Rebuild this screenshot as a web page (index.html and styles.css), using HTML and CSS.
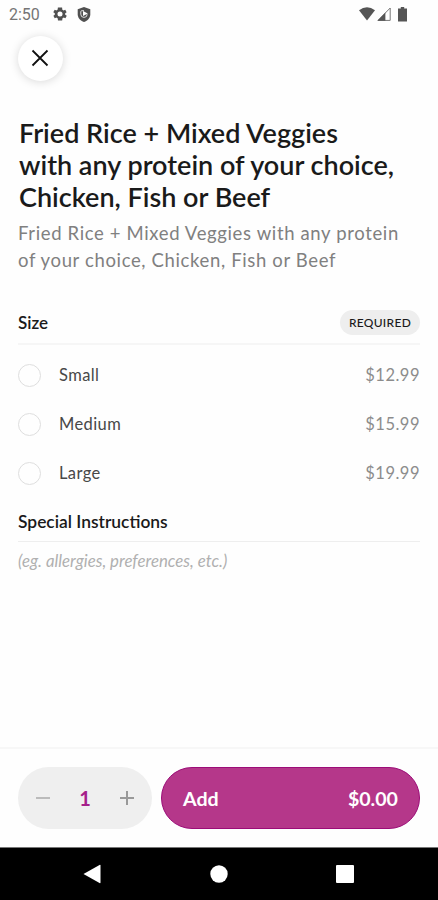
FILE: index.html
```html
<!DOCTYPE html>
<html lang="en">
<head>
    <meta charset="UTF-8">
    <meta name="viewport" content="width=device-width, initial-scale=1.0">
    <title>Fried Rice + Mixed Veggies</title>
    <link rel="stylesheet" href="styles.css">
</head>
<body>
    <div class="screen">
        <div class="status-bar">
            <span class="clock">2:50</span>
            <svg class="gear" width="14" height="14" viewBox="2 2 20 20">
                <path fill="#505050" fill-rule="evenodd" d="M19.4 13a7.5 7.5 0 0 0 0-2l2.1-1.6-2-3.5-2.5 1a7.3 7.3 0 0 0-1.7-1L15 2.6h-6l-.4 3.3a7.3 7.3 0 0 0-1.7 1l-2.5-1-2 3.5L4.600 11a7.5 7.5 0 0 0 0 2l-2.100 1.600 2 3.500 2.500-1a7.300 7.300 0 0 0 1.700 1l.4 3.300h6l.4-3.300a7.300 7.300 0 0 0 1.700-1l2.500 1 2-3.500zM12 8.400a3.600 3.600 0 1 1 0 7.200 3.600 3.600 0 0 1 0-7.200z"/>
            </svg>
            <svg class="shield" width="14" height="15" viewBox="0 0 14 15">
                <path fill="#505050" d="M7 0l6.300 2.300v4.900c0 3.500-2.600 6.500-6.300 7.800C3.300 13.700.7 10.700.7 7.200V2.300z"/>
                <path fill="none" stroke="#ddd" stroke-width="1" d="M7 3.700H4.800q-1 0-1 1v2.500a3.200 3.200 0 0 0 6.400 0"/>
                <path fill="#fff" d="M6 4l4.800 2.500L6 9z"/>
            </svg>
            <div class="signals">
                <svg width="16" height="14" viewBox="0 0 16 14">
                    <path fill="#555" d="M0 3.200Q8-2.600 16 3.200L8 13.500z"/>
                </svg>
                <svg width="14" height="14" viewBox="0 0 14 14">
                    <path fill="none" stroke="#777" d="M1 13.400L13.200 1v12.400z"/>
                    <path fill="#555" d="M.4 13.800L8.400 5.600v8.200z"/>
                </svg>
                <svg class="battery" width="9" height="15" viewBox="0 0 9 15">
                    <path fill="#555" d="M2.800 0h3.400v1.500H9v13H0v-13h2.800z"/>
                </svg>
            </div>
        </div>

        <button class="close" aria-label="Close">
            <svg width="18" height="18" viewBox="0 0 18 18">
                <path stroke="#111" stroke-width="1.8" d="M1.500 1.500l15 15M16.500 1.500l-15 15"/>
            </svg>
        </button>

        <main class="content">
            <h1>Fried Rice + Mixed Veggies<br>with any protein of your choice,<br>Chicken, Fish or Beef</h1>
            <p class="description">Fried Rice + Mixed Veggies with any protein<br>of your choice, Chicken, Fish or Beef</p>

            <div class="section-header">
                <h2>Size</h2>
                <span class="badge">REQUIRED</span>
            </div>
            <div class="options">
                <label class="option"><span class="radio"></span><span class="name">Small</span><span class="price">$12.99</span></label>
                <label class="option"><span class="radio"></span><span class="name">Medium</span><span class="price">$15.99</span></label>
                <label class="option"><span class="radio"></span><span class="name">Large</span><span class="price">$19.99</span></label>
            </div>

            <h2 class="instructions-title">Special Instructions</h2>
            <p class="instructions">(eg. allergies, preferences, etc.)</p>
        </main>

        <footer class="footer">
            <div class="quantity">
                <svg width="14" height="14" viewBox="0 0 14 14">
                    <path stroke="#bbb" stroke-width="2" d="M0 7h14"/>
                </svg>
                <span class="count">1</span>
                <svg width="14" height="14" viewBox="0 0 14 14">
                    <path stroke="#999" stroke-width="2" d="M0 7h14M7 0v14"/>
                </svg>
            </div>
            <button class="add"><span>Add</span><span class="total">$0.00</span></button>
        </footer>

        <nav class="nav-bar">
            <svg width="18" height="20" viewBox="0 0 18 20"><path fill="#fff" d="M.5 10L16.500 1q1-.5 1 .6v16.800q0 1.100-1 .6z"/></svg>
            <svg width="18" height="18" viewBox="0 0 18 18"><circle cx="9" cy="9" r="8.700" fill="#fff"/></svg>
            <svg width="18" height="18" viewBox="0 0 18 18"><rect width="18" height="18" rx="1" fill="#fff"/></svg>
        </nav>
    </div>
</body>
</html>
```
FILE: styles.css
```css
* {
    box-sizing: border-box;
}

body {
    margin: 0;
    background-color: #fefefe;
    color: #1a1a1a;
    font-family: Lato, "Liberation Sans", sans-serif;
}

h1, h2, p {
    margin: 0;
}

svg {
    display: block;
    flex-shrink: 0;
}

button {
    border: none;
    font-family: inherit;
    cursor: pointer;
}

.screen {
    display: flex;
    flex-direction: column;
    height: 900px;
}

.status-bar {
    display: flex;
    align-items: center;
    height: 28px;
    padding: 0 31px 0 9px;
}

.clock {
    width: 44px;
    font-family: Roboto, sans-serif;
    font-size: 16px;
    color: #757575;
}

.shield {
    margin-left: 10px;
}

.signals {
    display: flex;
    align-items: center;
    gap: 2px;
    margin-left: auto;
}

.battery {
    margin-left: 5px;
}

.close {
    display: flex;
    align-items: center;
    justify-content: center;
    width: 45px;
    height: 45px;
    margin: 8px 0 0 18px;
    padding: 0 1px 1px 0;
    border-radius: 50%;
    background-color: #fff;
    box-shadow: 0 1px 10px rgba(0, 0, 0, 0.15);
}

.content {
    flex: 1;
    padding: 36px 18px 0;
}

h1 {
    padding-left: 1px;
    font-size: 27px;
    font-weight: 600;
    line-height: 32px;
    white-space: nowrap;
}

.description {
    margin-top: 7px;
    font-size: 18.5px;
    line-height: 27px;
    letter-spacing: 0.64px;
    color: #808080;
    white-space: nowrap;
}

.section-header {
    display: flex;
    align-items: center;
    justify-content: space-between;
    height: 43px;
    margin-top: 28px;
    border-bottom: 2px solid #f6f6f6;
}

h2 {
    font-weight: 600;
    line-height: 20px;
}

.section-header h2 {
    padding-top: 1px;
    font-size: 17px;
}

.badge {
    width: 80px;
    height: 25px;
    border-radius: 13px;
    background-color: #eee;
    font-size: 12px;
    font-weight: 500;
    line-height: 26px;
    text-align: center;
    letter-spacing: 0.3px;
}

.options {
    padding-top: 6px;
}

.option {
    display: flex;
    align-items: center;
    height: 49px;
    font-size: 16.5px;
    letter-spacing: 0.4px;
}

.radio {
    width: 23px;
    height: 23px;
    margin-right: 18px;
    border: 1.5px solid #dedede;
    border-radius: 50%;
}

.name {
    padding-bottom: 1px;
    color: #484848;
}

.price {
    margin-left: auto;
    padding-bottom: 1px;
    color: #8c8c8c;
    letter-spacing: 0.5px;
}

.instructions-title {
    margin-top: 14px;
    padding-bottom: 9px;
    border-bottom: 1px solid #eee;
    font-size: 17.4px;
}

.instructions {
    margin-top: 9px;
    font-size: 16.8px;
    font-style: italic;
    line-height: 20px;
    color: #b0b0b0;
}

.footer {
    display: flex;
    gap: 9px;
    height: 100px;
    padding: 18px 18px 0;
    border-top: 2px solid #f7f7f7;
}

.quantity {
    display: flex;
    align-items: center;
    justify-content: space-between;
    width: 134px;
    height: 62px;
    padding: 0 18px;
    border-radius: 31px;
    background-color: #efefef;
}

.count {
    font-size: 20px;
    font-weight: 700;
    color: #a5208a;
}

.add {
    display: flex;
    flex: 1;
    align-items: center;
    justify-content: space-between;
    height: 62px;
    padding: 0 21px;
    border: 1px solid #9c0c78;
    border-radius: 31px;
    background-color: #b5378a;
    color: #fff;
    font-size: 19.6px;
    font-weight: 700;
}

.nav-bar {
    display: flex;
    align-items: center;
    justify-content: space-between;
    height: 53px;
    padding: 0 84px 0 83px;
    border-top: 1px solid #777;
    background-color: #000;
}
```
